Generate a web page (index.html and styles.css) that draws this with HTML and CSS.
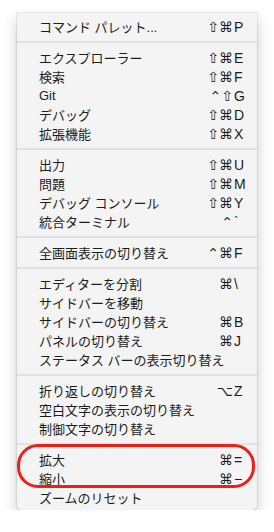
FILE: index.html
```html
<!DOCTYPE html>
<html lang="ja">
<head>
    <meta charset="UTF-8">
    <meta name="viewport" content="width=device-width, initial-scale=1.0">
    <title>表示メニュー</title>
    <link rel="stylesheet" href="styles.css">
</head>
<body>

<div class="menu">
  <ul class="items">
    <li class="item"><span class="label">コマンド パレット...</span><span class="keys"><span class="mods">⇧⌘</span><span class="key">P</span></span></li>
    <li class="sep"></li>
    <li class="item"><span class="label">エクスプローラー</span><span class="keys"><span class="mods">⇧⌘</span><span class="key">E</span></span></li>
    <li class="item"><span class="label">検索</span><span class="keys"><span class="mods">⇧⌘</span><span class="key">F</span></span></li>
    <li class="item"><span class="label">Git</span><span class="keys"><span class="mods">⌃⇧</span><span class="key">G</span></span></li>
    <li class="item"><span class="label">デバッグ</span><span class="keys"><span class="mods">⇧⌘</span><span class="key">D</span></span></li>
    <li class="item"><span class="label">拡張機能</span><span class="keys"><span class="mods">⇧⌘</span><span class="key">X</span></span></li>
    <li class="sep"></li>
    <li class="item"><span class="label">出力</span><span class="keys"><span class="mods">⇧⌘</span><span class="key">U</span></span></li>
    <li class="item"><span class="label">問題</span><span class="keys"><span class="mods">⇧⌘</span><span class="key">M</span></span></li>
    <li class="item"><span class="label">デバッグ コンソール</span><span class="keys"><span class="mods">⇧⌘</span><span class="key">Y</span></span></li>
    <li class="item"><span class="label">統合ターミナル</span><span class="keys"><span class="mods">⌃</span><span class="key">`</span></span></li>
    <li class="sep"></li>
    <li class="item"><span class="label">全画面表示の切り替え</span><span class="keys"><span class="mods">⌃⌘</span><span class="key">F</span></span></li>
    <li class="sep"></li>
    <li class="item"><span class="label">エディターを分割</span><span class="keys"><span class="mods">⌘</span><span class="key">\</span></span></li>
    <li class="item"><span class="label">サイドバーを移動</span></li>
    <li class="item"><span class="label">サイドバーの切り替え</span><span class="keys"><span class="mods">⌘</span><span class="key">B</span></span></li>
    <li class="item"><span class="label">パネルの切り替え</span><span class="keys"><span class="mods">⌘</span><span class="key">J</span></span></li>
    <li class="item"><span class="label">ステータス バーの表示切り替え</span></li>
    <li class="sep"></li>
    <li class="item"><span class="label">折り返しの切り替え</span><span class="keys"><span class="mods">⌥</span><span class="key">Z</span></span></li>
    <li class="item"><span class="label">空白文字の表示の切り替え</span></li>
    <li class="item"><span class="label">制御文字の切り替え</span></li>
    <li class="sep"></li>
    <li class="marked">
      <ul class="items">
        <li class="item"><span class="label">拡大</span><span class="keys"><span class="mods">⌘</span><span class="key">=</span></span></li>
        <li class="item"><span class="label">縮小</span><span class="keys"><span class="mods">⌘</span><span class="key">−</span></span></li>
      </ul>
    </li>
    <li class="item"><span class="label">ズームのリセット</span></li>
  </ul>
</div>

</body>
</html>
```

FILE: styles.css
```css
body {
    margin: 0;
    padding: 13px 17px 0;
    background: #fff;
    font-family: "Liberation Sans", "Noto Sans CJK JP", sans-serif;
    font-size: 13px;
    color: #1c1c1c;
}
.menu {
    width: 240px;
    height: 497px;
    box-sizing: border-box;
    padding: 4px 0;
    background-color: #f4f4f4;
    border-radius: 0 0 5px 5px;
    box-shadow: 0 0 0 1px rgba(0, 0, 0, 0.07), 0 6px 14px rgba(0, 0, 0, 0.22);
}
.items {
    list-style: none;
    margin: 0;
    padding: 0;
}
.item {
    display: flex;
    align-items: center;
    height: 19px;
    padding: 0 12px 0 22px;
    white-space: nowrap;
}
.label {
    flex: 1;
}
.keys {
    display: flex;
    align-items: baseline;
}
.mods {
    font-family: "DejaVu Sans", sans-serif;
    font-size: 14px;
    margin-right: 1px;
}
.key {
    width: 11px;
    font-size: 14px;
}
.sep {
    height: 12px;
    display: flex;
    align-items: center;
}
.sep::before {
    content: "";
    flex: 1;
    height: 2px;
    background-color: #e2e2e2;
}
.marked {
    position: relative;
}
.marked::after {
    content: "";
    position: absolute;
    top: -6px;
    bottom: 0;
    left: 0;
    right: 2px;
    border: 3px solid #f01e18;
    border-radius: 21px;
}
```
